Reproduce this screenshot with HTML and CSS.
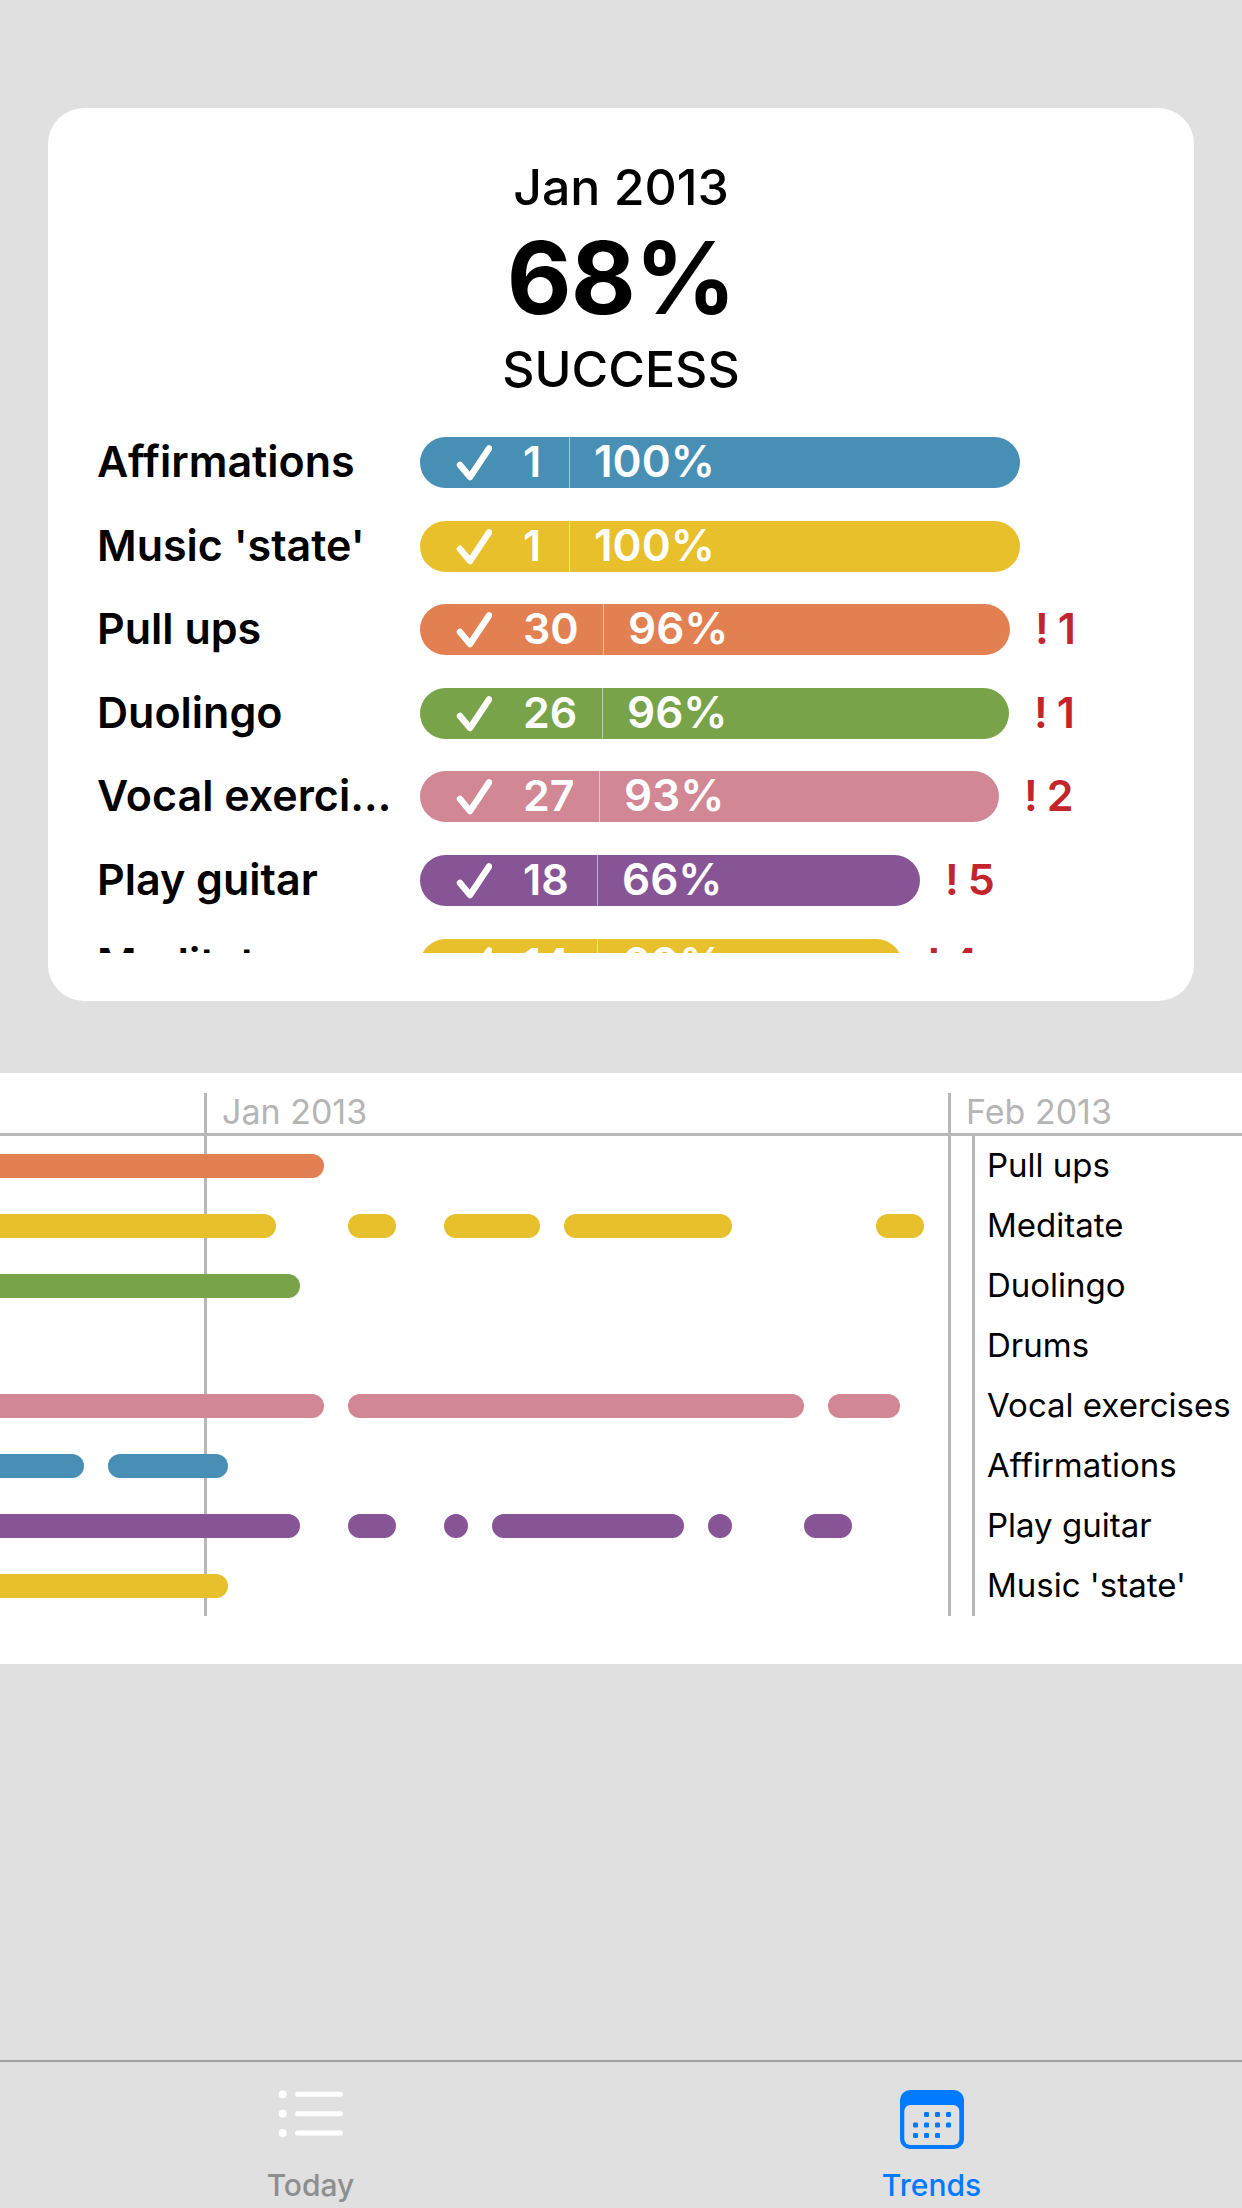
FILE: index.html
```html
<!DOCTYPE html>
<html lang="en">
<head>
<meta charset="utf-8">
<title>Trends</title>
<link rel="stylesheet" href="styles.css">
</head>
<body>
<main class="screen">
  <section class="card">
    <header class="summary">
      <div class="summary-month">Jan 2013</div>
      <div class="summary-value">68%</div>
      <div class="summary-label">SUCCESS</div>
    </header>
    <div class="stats">
      <div class="stat">
        <div class="stat-name">Affirmations</div>
        <div class="stat-bar blue" style="width:600px">
          <div class="stat-count" style="width:150px"><svg class="check" viewBox="0 0 40 37"><path d="M8 21 L18 33 L37 4.500"/></svg><span class="stat-num">1</span></div>
          <div class="stat-pct">100%</div>
        </div>
      </div>
      <div class="stat">
        <div class="stat-name">Music 'state'</div>
        <div class="stat-bar yellow" style="width:600px">
          <div class="stat-count" style="width:150px"><svg class="check" viewBox="0 0 40 37"><path d="M8 21 L18 33 L37 4.500"/></svg><span class="stat-num">1</span></div>
          <div class="stat-pct">100%</div>
        </div>
      </div>
      <div class="stat">
        <div class="stat-name">Pull ups</div>
        <div class="stat-bar orange" style="width:590px">
          <div class="stat-count" style="width:184px"><svg class="check" viewBox="0 0 40 37"><path d="M8 21 L18 33 L37 4.500"/></svg><span class="stat-num">30</span></div>
          <div class="stat-pct">96%</div>
        </div>
        <div class="stat-miss"><span class="bang">!</span>1</div>
      </div>
      <div class="stat">
        <div class="stat-name">Duolingo</div>
        <div class="stat-bar green" style="width:589px">
          <div class="stat-count" style="width:183px"><svg class="check" viewBox="0 0 40 37"><path d="M8 21 L18 33 L37 4.500"/></svg><span class="stat-num">26</span></div>
          <div class="stat-pct">96%</div>
        </div>
        <div class="stat-miss"><span class="bang">!</span>1</div>
      </div>
      <div class="stat">
        <div class="stat-name">Vocal exercises</div>
        <div class="stat-bar pink" style="width:579px">
          <div class="stat-count" style="width:180px"><svg class="check" viewBox="0 0 40 37"><path d="M8 21 L18 33 L37 4.500"/></svg><span class="stat-num">27</span></div>
          <div class="stat-pct">93%</div>
        </div>
        <div class="stat-miss"><span class="bang">!</span>2</div>
      </div>
      <div class="stat">
        <div class="stat-name">Play guitar</div>
        <div class="stat-bar purple" style="width:500px">
          <div class="stat-count" style="width:178px"><svg class="check" viewBox="0 0 40 37"><path d="M8 21 L18 33 L37 4.500"/></svg><span class="stat-num">18</span></div>
          <div class="stat-pct">66%</div>
        </div>
        <div class="stat-miss"><span class="bang">!</span>5</div>
      </div>
      <div class="stat">
        <div class="stat-name">Meditate</div>
        <div class="stat-bar yellow" style="width:482px">
          <div class="stat-count" style="width:178px"><svg class="check" viewBox="0 0 40 37"><path d="M8 21 L18 33 L37 4.500"/></svg><span class="stat-num">14</span></div>
          <div class="stat-pct">60%</div>
        </div>
        <div class="stat-miss"><span class="bang">!</span>4</div>
      </div>
    </div>
  </section>

  <section class="timeline">
    <div class="months">
      <div class="month" style="left:204px">Jan 2013</div>
      <div class="month" style="left:948px">Feb 2013</div>
    </div>
    <div class="chart">
      <div class="gridline" style="left:204px"></div>
      <div class="gridline" style="left:948px"></div>
      <div class="gridline" style="left:972px"></div>
      <div class="track"><i class="seg orange" style="left:-20px;width:344px"></i><span class="track-name">Pull ups</span></div>
      <div class="track"><i class="seg yellow" style="left:-20px;width:296px"></i><i class="seg yellow" style="left:348px;width:48px"></i><i class="seg yellow" style="left:444px;width:96px"></i><i class="seg yellow" style="left:564px;width:168px"></i><i class="seg yellow" style="left:876px;width:48px"></i><span class="track-name">Meditate</span></div>
      <div class="track"><i class="seg green" style="left:-20px;width:320px"></i><span class="track-name">Duolingo</span></div>
      <div class="track"><span class="track-name">Drums</span></div>
      <div class="track"><i class="seg pink" style="left:-20px;width:344px"></i><i class="seg pink" style="left:348px;width:456px"></i><i class="seg pink" style="left:828px;width:72px"></i><span class="track-name">Vocal exercises</span></div>
      <div class="track"><i class="seg blue" style="left:-20px;width:104px"></i><i class="seg blue" style="left:108px;width:120px"></i><span class="track-name">Affirmations</span></div>
      <div class="track"><i class="seg purple" style="left:-20px;width:320px"></i><i class="seg purple" style="left:348px;width:48px"></i><i class="seg purple" style="left:444px;width:24px"></i><i class="seg purple" style="left:492px;width:192px"></i><i class="seg purple" style="left:708px;width:24px"></i><i class="seg purple" style="left:804px;width:48px"></i><span class="track-name">Play guitar</span></div>
      <div class="track"><i class="seg yellow" style="left:-20px;width:248px"></i><span class="track-name">Music 'state'</span></div>
    </div>
  </section>

  <nav class="tabbar">
    <div class="tab">
      <svg class="tab-icon" width="64" height="60" viewBox="0 0 64 60">
        <g fill="#fff">
          <circle cx="3.700" cy="4.300" r="4"/><circle cx="3.700" cy="23.700" r="4"/><circle cx="3.700" cy="43" r="4"/>
          <rect x="16" y="1.800" width="48" height="5" rx="2.500"/><rect x="16" y="21.200" width="48" height="5" rx="2.500"/><rect x="16" y="40.500" width="48" height="5" rx="2.500"/>
        </g>
      </svg>
      <div class="tab-label">Today</div>
    </div>
    <div class="tab is-active">
      <svg class="tab-icon" width="64" height="60" viewBox="0 0 64 60">
        <rect x="0" y="0" width="64" height="59" rx="10" fill="#007aff"/>
        <rect x="4.300" y="15" width="55" height="40" rx="6" fill="#e0e0e0"/>
        <g fill="#007aff">
          <rect x="24" y="22" width="5" height="5" rx="1.200"/><rect x="35" y="22" width="5" height="5" rx="1.200"/><rect x="46" y="22" width="5" height="5" rx="1.200"/>
          <rect x="13" y="32.500" width="5" height="5" rx="1.200"/><rect x="24" y="32.500" width="5" height="5" rx="1.200"/><rect x="35" y="32.500" width="5" height="5" rx="1.200"/><rect x="46" y="32.500" width="5" height="5" rx="1.200"/>
          <rect x="13" y="43" width="5" height="5" rx="1.200"/><rect x="24" y="43" width="5" height="5" rx="1.200"/><rect x="35" y="43" width="5" height="5" rx="1.200"/>
        </g>
      </svg>
      <div class="tab-label">Trends</div>
    </div>
  </nav>
</main>
</body>
</html>
```

FILE: styles.css
```css
* { box-sizing: border-box; }
html, body { margin: 0; padding: 0; }
body { font-family: Inter, "Liberation Sans", sans-serif; color: #000; background: #e0e0e0; }

.screen { display: flex; flex-direction: column; width: 1242px; height: 2208px; overflow: hidden; background: #e0e0e0; padding-top: 108px; }

.card { flex: none; height: 893px; margin: 0 48px; padding: 47px 0 0 49px; background: #fff; border-radius: 36px; }
.summary { display: flex; flex-direction: column; align-items: center; margin-left: -49px; }
.summary-month { font-size: 50px; line-height: 64px; font-weight: 500; }
.summary-value { font-size: 100px; line-height: 122px; font-weight: 700; margin: -2px 0 -9px; letter-spacing: -1px; }
.summary-label { font-size: 50px; line-height: 62px; font-weight: 500; margin-top: 8px; }

.stats { display: flex; flex-direction: column; gap: 32.6px; height: 518px; margin-top: 35px; padding-top: 2px; overflow: hidden; }
.stat { flex: none; display: flex; align-items: center; height: 51px; font-size: 43px; line-height: 53px; font-weight: 600; }
.stat-name { flex: none; align-self: flex-start; width: 323px; margin-top: -2px; padding-right: 24px; white-space: nowrap; overflow: hidden; text-overflow: ellipsis; }
.stat-bar { flex: none; display: flex; height: 51px; border-radius: 26px; color: #fff; }
.stat-count { flex: none; display: flex; align-items: center; padding-left: 32px; border-right: 1px solid rgba(255,255,255,.5); }
.stat-num { margin-bottom: 2px; }
.check { flex: none; width: 40px; height: 37px; margin-right: 31px; }
.check path { fill: none; stroke: #fff; stroke-width: 6.500; stroke-linecap: round; stroke-linejoin: round; }
.stat-pct { align-self: flex-start; margin-top: -2px; font-size: 44px; padding-left: 24px; }
.stat-miss { margin: -2px 0 0 25px; color: #c4252c; }
.bang { margin-right: 9px; }

.blue { background: #488fb5; }
.yellow { background: #e7c02c; }
.orange { background: #e28051; }
.green { background: #79a349; }
.pink { background: #d28794; }
.purple { background: #875595; }

.timeline { flex: none; height: 591px; margin-top: 72px; background: #fff; }
.months { position: relative; height: 63px; border-bottom: 3px solid #b8b8b8; }
.month { position: absolute; top: 20px; bottom: 0; padding: 0 0 0 15px; font-size: 34px; line-height: 38px; color: #b5b5b5; border-left: 3px solid #b8b8b8; white-space: nowrap; margin-bottom: -3px; }
.chart { position: relative; display: flex; flex-direction: column; gap: 36px; height: 480px; padding-top: 18px; overflow: hidden; }
.gridline { position: absolute; top: 0; bottom: 0; width: 3px; background: #b8b8b8; }
.track { position: relative; flex: none; height: 24px; }
.seg { position: absolute; top: 0; height: 24px; border-radius: 12px; }
.track-name { position: absolute; left: 987px; top: -11px; font-size: 33px; line-height: 44px; white-space: nowrap; }

.tabbar { flex: none; display: grid; grid-template-columns: 1fr 1fr; margin-top: auto; height: 148px; border-top: 2px solid #a0a0a0; }
.tab { display: flex; flex-direction: column; align-items: center; padding-top: 28px; color: #8e8e8e; }
.tab.is-active { color: #007aff; }
.tab-icon { display: block; flex: none; overflow: visible; }
.tab-label { margin-top: 17px; font-size: 30px; line-height: 36px; font-weight: 500; }
```
